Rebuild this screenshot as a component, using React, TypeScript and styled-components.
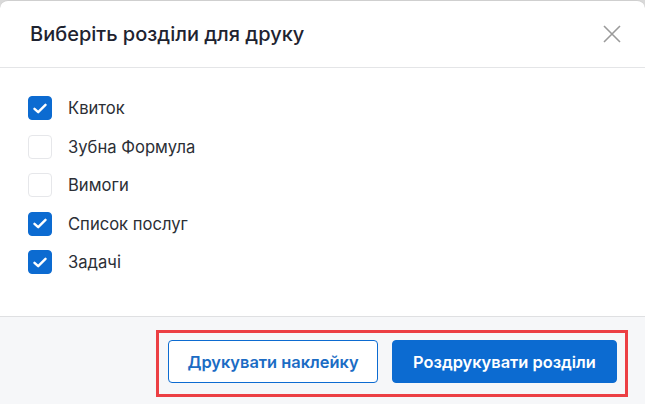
import { useState } from 'react';
import styled, { createGlobalStyle } from 'styled-components';

const GlobalStyle = createGlobalStyle`
  html, body {
    margin: 0;
    padding: 0;
    background: #d9d9d9;
  }
  * {
    box-sizing: border-box;
  }
`;

const Modal = styled.div`
  width: 645px;
  height: 404px;
  background: #ffffff;
  border-radius: 8px 8px 0 0;
  border-top: 1px solid #cfcfcf;
  display: flex;
  flex-direction: column;
  font-family: Inter, 'Noto Sans', sans-serif;
  overflow: hidden;
`;

const Header = styled.div`
  height: 67px;
  flex-shrink: 0;
  display: flex;
  align-items: center;
  justify-content: space-between;
  padding: 0 22px 0 30px;
  border-bottom: 1px solid #e4e5e7;
`;

const Title = styled.h2`
  margin: 0;
  font-size: 20px;
  font-weight: 500;
  color: #1e2330;
`;

const CloseButton = styled.button`
  width: 22px;
  height: 22px;
  padding: 0;
  border: none;
  background: none;
  cursor: pointer;
  display: flex;
  align-items: center;
  justify-content: center;
`;

const Body = styled.div`
  flex: 1;
  display: flex;
  flex-direction: column;
  gap: 14.5px;
  padding: 28px 28px 0;
`;

const Row = styled.label`
  display: flex;
  align-items: center;
  gap: 16px;
  cursor: pointer;
  font-size: 16.6px;
  color: #2c2f36;
`;

const Box = styled.span<{ $checked: boolean }>`
  width: 24px;
  height: 24px;
  border-radius: 4px;
  display: flex;
  align-items: center;
  justify-content: center;
  background: ${({ $checked }) => ($checked ? '#0c6bd1' : '#ffffff')};
  border: 1px solid ${({ $checked }) => ($checked ? '#0c6bd1' : '#e6e7ea')};
`;

const Footer = styled.div`
  height: 88px;
  flex-shrink: 0;
  display: flex;
  justify-content: flex-end;
  align-items: flex-start;
  padding: 13px 17px 0 0;
  background: #f6f7f9;
  border-top: 1px solid #dfe0e2;
`;

const Highlight = styled.div`
  display: flex;
  gap: 14px;
  padding: 7px 8px 11px 9px;
  border: 3px solid #ec3f44;
`;

const ActionButton = styled.button<{ $primary?: boolean; $width: number }>`
  width: ${({ $width }) => $width}px;
  height: 43px;
  border-radius: 4px;
  font-family: Inter, 'Noto Sans', sans-serif;
  font-size: 16.4px;
  font-weight: 600;
  cursor: pointer;
  border: 1px solid #0c6bd1;
  background: ${({ $primary }) => ($primary ? '#0c6bd1' : '#ffffff')};
  color: ${({ $primary }) => ($primary ? '#ffffff' : '#1b6cc4')};
`;

const sections = [
  { id: 'ticket', label: 'Квиток', checked: true },
  { id: 'formula', label: 'Зубна Формула', checked: false },
  { id: 'reqs', label: 'Вимоги', checked: false },
  { id: 'services', label: 'Список послуг', checked: true },
  { id: 'tasks', label: 'Задачі', checked: true },
];

export default function App() {
  const [checked, setChecked] = useState<Record<string, boolean>>(
    Object.fromEntries(sections.map((s) => [s.id, s.checked]))
  );

  const toggle = (id: string) => setChecked((prev) => ({ ...prev, [id]: !prev[id] }));

  return (
    <>
      <GlobalStyle />
      <Modal>
        <Header>
          <Title>Виберіть розділи для друку</Title>
          <CloseButton aria-label="Закрити">
            <svg width="18" height="18" viewBox="0 0 18 18">
              <path d="M1 1 L17 17 M17 1 L1 17" stroke="#9a9a9a" strokeWidth="1.6" fill="none" />
            </svg>
          </CloseButton>
        </Header>
        <Body>
          {sections.map((s) => (
            <Row key={s.id} onClick={() => toggle(s.id)}>
              <Box $checked={checked[s.id]}>
                {checked[s.id] && (
                  <svg width="14" height="11" viewBox="0 0 14 11">
                    <path
                      d="M1.5 5.8 L5.2 9.2 L12.5 1.8"
                      stroke="#ffffff"
                      strokeWidth="2.4"
                      strokeLinecap="round"
                      strokeLinejoin="round"
                      fill="none"
                    />
                  </svg>
                )}
              </Box>
              {s.label}
            </Row>
          ))}
        </Body>
        <Footer>
          <Highlight>
            <ActionButton $width={210}>Друкувати наклейку</ActionButton>
            <ActionButton $primary $width={225}>Роздрукувати розділи</ActionButton>
          </Highlight>
        </Footer>
      </Modal>
    </>
  );
}
